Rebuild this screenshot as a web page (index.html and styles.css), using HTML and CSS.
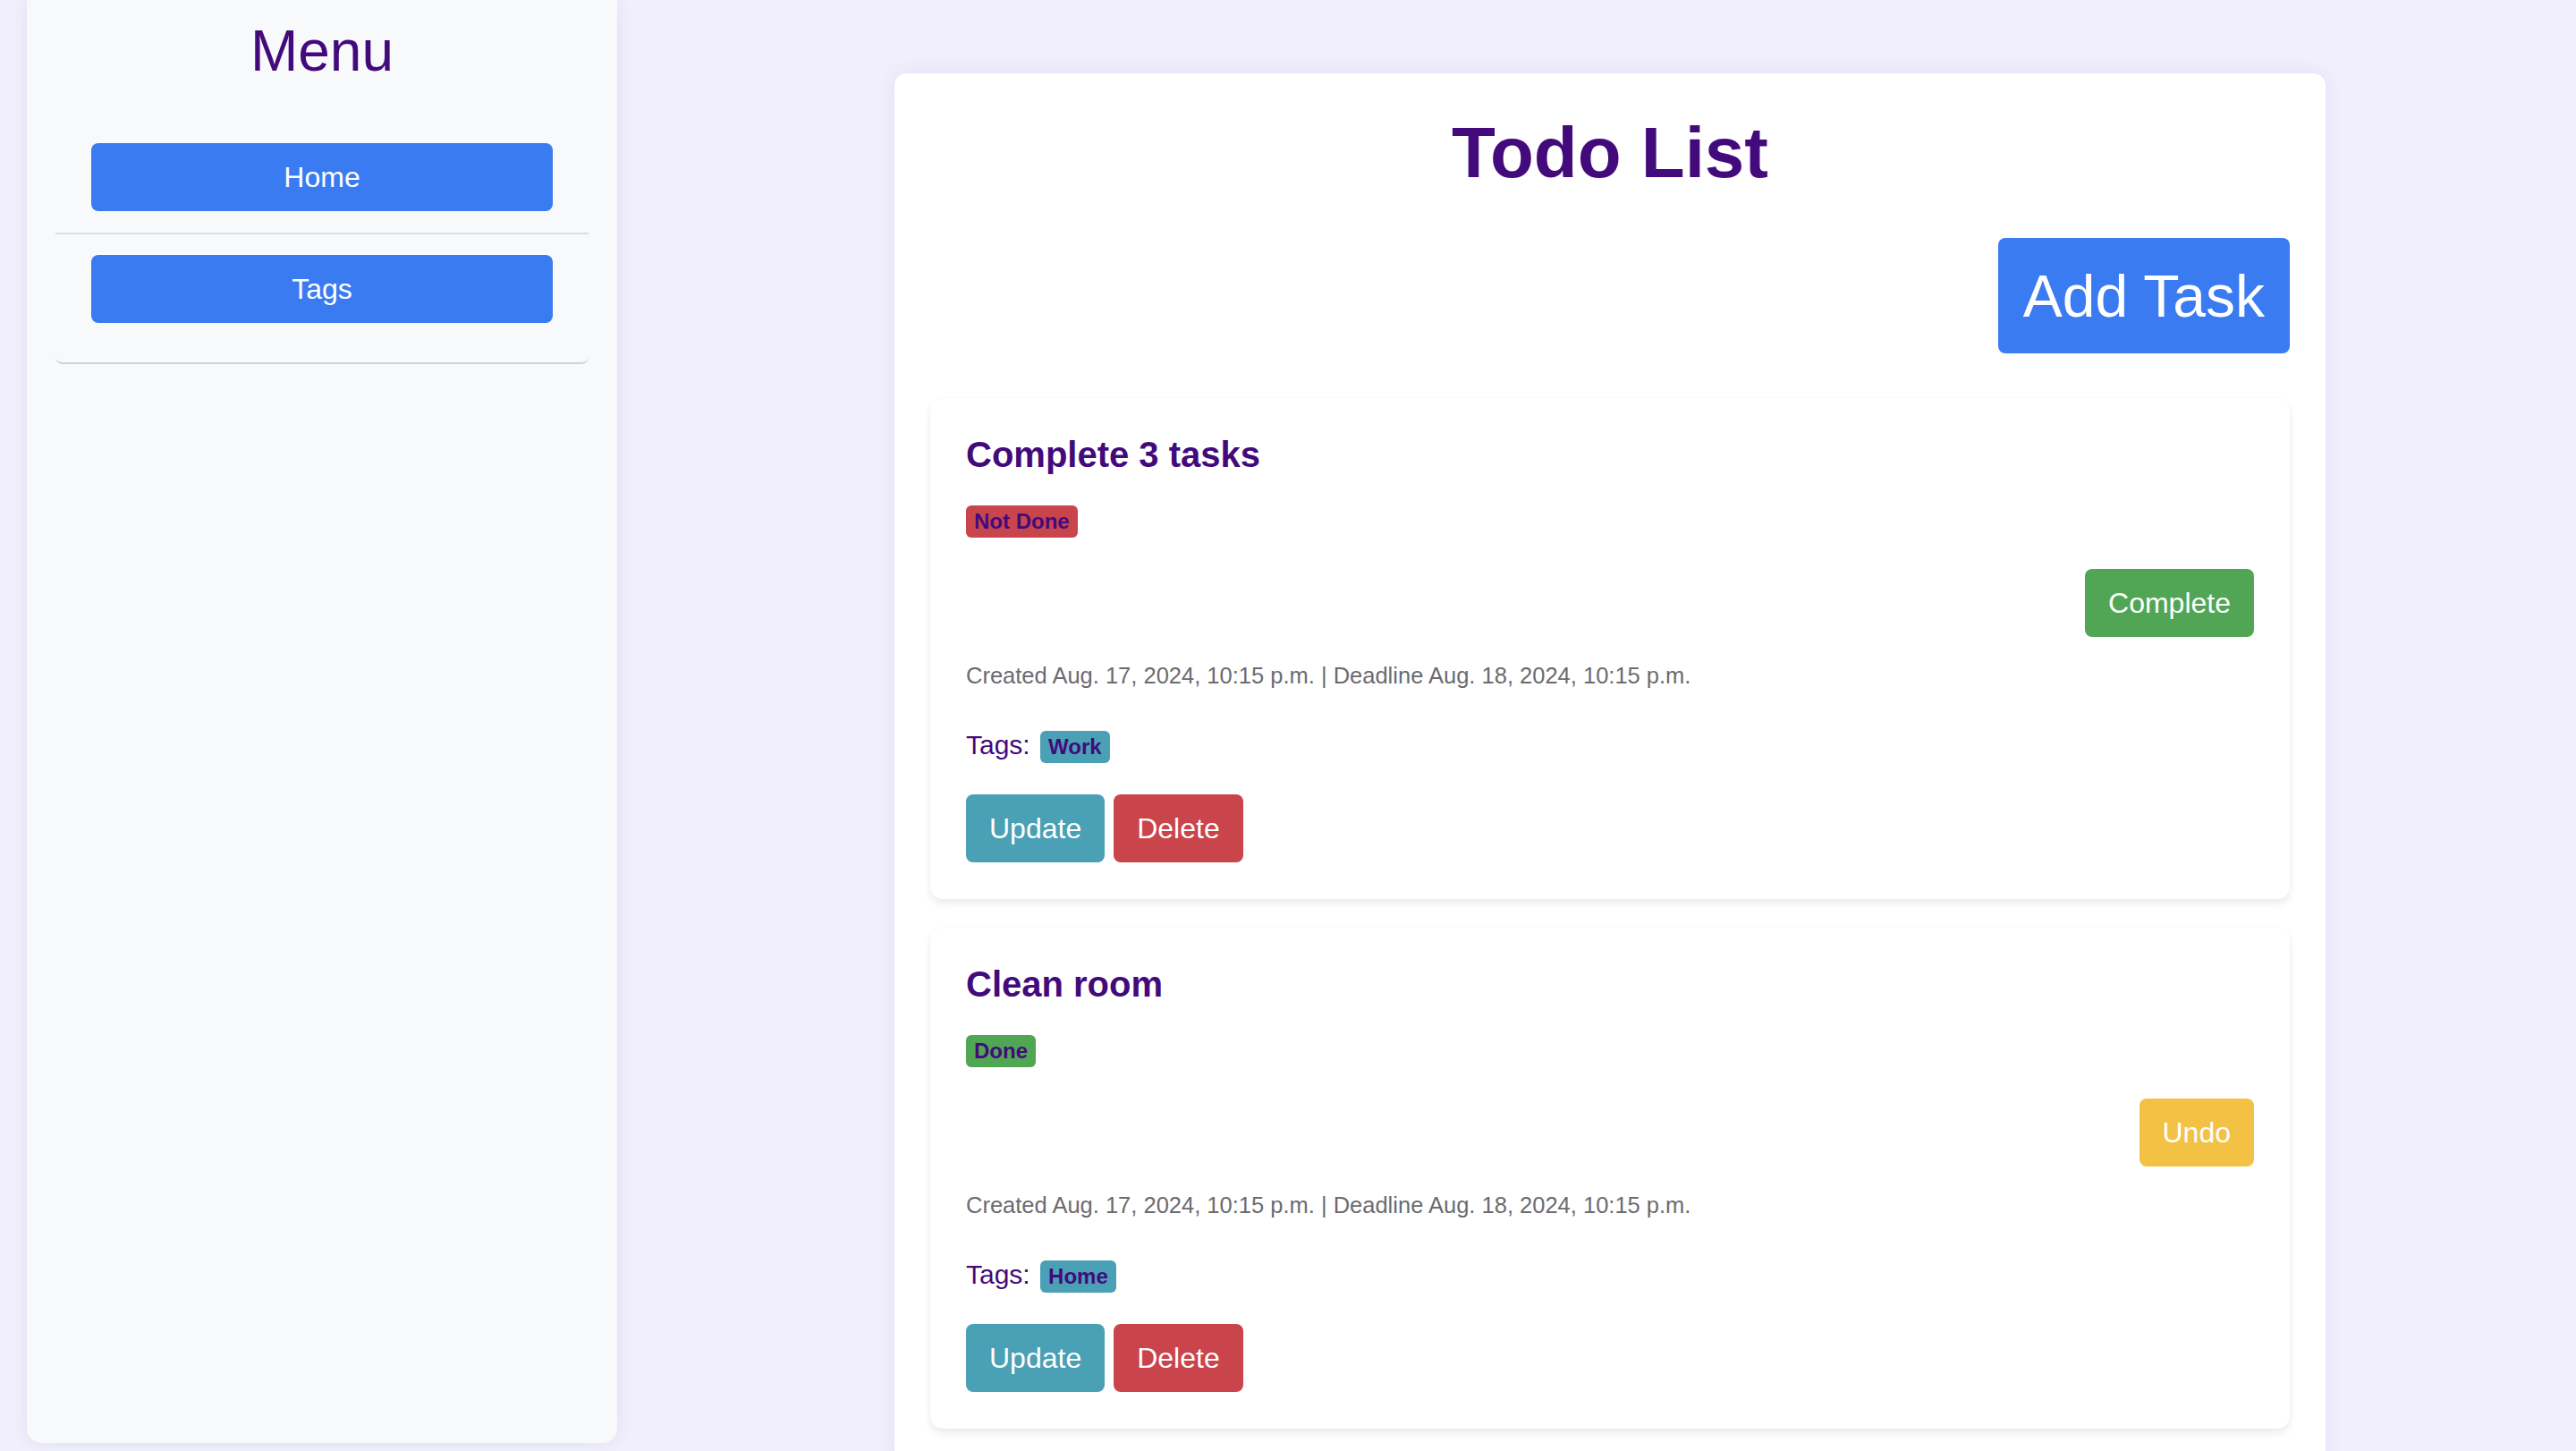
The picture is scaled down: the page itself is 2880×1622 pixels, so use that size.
FILE: index.html
```html
<!DOCTYPE html>
<html lang="en">
<head>
<meta charset="utf-8">
<title>Todo List</title>
<link rel="stylesheet" href="styles.css">
</head>
<body>
<div class="layout">
  <aside class="sidebar">
    <h2 class="menu-title">Menu</h2>
    <ul class="nav">
      <li class="nav-item"><a class="nav-link" href="#">Home</a></li>
      <li class="nav-item"><a class="nav-link" href="#">Tags</a></li>
    </ul>
  </aside>
  <main class="main">
    <section class="board">
      <h1 class="board-title">Todo List</h1>
      <div class="toolbar">
        <button class="btn btn-primary btn-lg">Add Task</button>
      </div>
      <div class="task-list">
        <article class="task">
          <h3 class="task-title">Complete 3 tasks</h3>
          <div class="status-row"><span class="badge badge-red">Not Done</span></div>
          <div class="toggle-row"><button class="btn btn-green">Complete</button></div>
          <p class="meta">Created Aug. 17, 2024, 10:15 p.m. | Deadline Aug. 18, 2024, 10:15 p.m.</p>
          <p class="tags">Tags: <span class="badge badge-teal">Work</span></p>
          <div class="actions">
            <button class="btn btn-teal">Update</button>
            <button class="btn btn-red">Delete</button>
          </div>
        </article>
        <article class="task">
          <h3 class="task-title">Clean room</h3>
          <div class="status-row"><span class="badge badge-green">Done</span></div>
          <div class="toggle-row"><button class="btn btn-yellow">Undo</button></div>
          <p class="meta">Created Aug. 17, 2024, 10:15 p.m. | Deadline Aug. 18, 2024, 10:15 p.m.</p>
          <p class="tags">Tags: <span class="badge badge-teal">Home</span></p>
          <div class="actions">
            <button class="btn btn-teal">Update</button>
            <button class="btn btn-red">Delete</button>
          </div>
        </article>
      </div>
    </section>
  </main>
</div>
</body>
</html>
```
FILE: styles.css
```css
* { box-sizing: border-box; }

html, body {
  margin: 0;
  padding: 0;
  background: #f0effb;
  font-family: "Liberation Sans", Arial, Helvetica, sans-serif;
  color: #430a7c;
  overflow: hidden;
}

.layout {
  display: flex;
  align-items: flex-start;
  height: 1622px;
}

/* Sidebar */
.sidebar {
  flex: 0 0 660px;
  margin-left: 30px;
  height: 1613px;
  background: #f8f9fb;
  border-radius: 0 0 16px 16px;
  box-shadow: 0 0 18px rgba(90, 70, 170, 0.09);
  padding: 20px 32px 0;
}

.menu-title {
  margin: 0 0 42px;
  font-size: 64px;
  font-weight: 400;
  line-height: 74px;
  text-align: center;
  color: #430a7c;
}

.nav {
  list-style: none;
  margin: 0;
  padding: 0 0 20px;
  border-bottom: 2px solid #d2d3d8;
  border-radius: 8px;
}

.nav-item {
  padding: 24px 40px;
}

.nav-item + .nav-item {
  border-top: 2px solid #dcdde1;
  padding-top: 23px;
}

.nav-link {
  display: flex;
  align-items: center;
  justify-content: center;
  height: 76px;
  background: #3a7bf2;
  color: #ffffff;
  font-size: 32px;
  text-decoration: none;
  border-radius: 8px;
}

/* Main */
.main {
  flex: 1;
  display: flex;
  justify-content: center;
  padding: 82px 0 0 30px;
}

.board {
  width: 1600px;
  background: #ffffff;
  border-radius: 14px;
  padding: 43px 40px 40px;
  box-shadow: 0 0 22px rgba(90, 70, 170, 0.08);
}

.board-title {
  margin: 0;
  font-size: 80px;
  font-weight: 700;
  line-height: 92px;
  text-align: center;
  color: #430a7c;
}

.toolbar {
  display: flex;
  justify-content: flex-end;
  margin-top: 49px;
}

.btn {
  display: inline-flex;
  align-items: center;
  justify-content: center;
  height: 76px;
  padding: 0 26px;
  border: none;
  border-radius: 8px;
  font-family: "Liberation Sans", Arial, Helvetica, sans-serif;
  font-size: 32px;
  color: #ffffff;
  cursor: pointer;
}

.btn-lg {
  height: 129px;
  padding: 0 28px;
  font-size: 66px;
}

.btn-primary { background: #3a7bf2; }
.btn-green { background: #51a655; }
.btn-teal { background: #4aa0b5; }
.btn-red { background: #c9444b; }
.btn-yellow { background: #f3c245; }

.task-list {
  display: flex;
  flex-direction: column;
  gap: 32px;
  margin-top: 50px;
}

.task {
  background: #ffffff;
  border-radius: 14px;
  padding: 40px 40px 41px;
  box-shadow: 0 5px 10px rgba(0, 0, 0, 0.08), 0 0 2px rgba(0, 0, 0, 0.03);
}

.task-title {
  margin: 0;
  font-size: 40px;
  font-weight: 700;
  line-height: 46px;
  color: #430a7c;
}

.status-row {
  margin-top: 34px;
  display: flex;
}

.badge {
  display: inline-block;
  padding: 4px 9px;
  border-radius: 6px;
  font-size: 24px;
  font-weight: 700;
  line-height: 28px;
  color: #430a7c;
}

.badge-red { background: #c9454d; }
.badge-green { background: #51a655; }
.badge-teal { background: #4aa0b5; }

.toggle-row {
  display: flex;
  justify-content: flex-end;
  margin-top: 35px;
}

.meta {
  margin: 29px 0 0;
  font-size: 25.5px;
  line-height: 29px;
  color: #6b6b70;
}

.tags {
  margin: 46px 0 0;
  font-size: 30px;
  color: #430a7c;
}

.tags .badge {
  margin-left: 3px;
}

.actions {
  display: flex;
  gap: 10px;
  margin-top: 35px;
}
```
